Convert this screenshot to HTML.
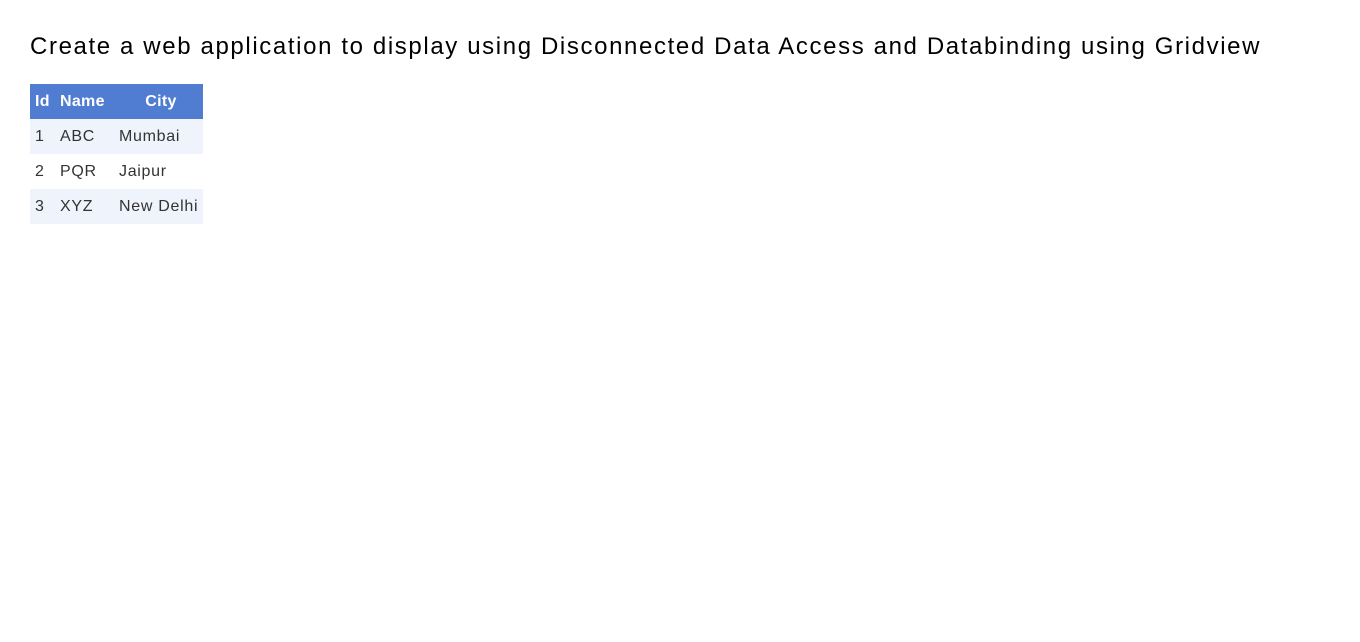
<!DOCTYPE html>
<html><head><style>
body{margin:0;background:#fff;font-family:"Liberation Sans",sans-serif;}
h2{position:absolute;left:30px;top:33px;margin:0;font-weight:normal;font-size:24px;color:#000;white-space:nowrap;letter-spacing:1.62px}
table{position:absolute;left:30px;top:84px;border-collapse:collapse;table-layout:fixed;width:173px;font-size:16px;color:#333;letter-spacing:0.7px}
td,th{height:35px;padding:0 0 0 5px;white-space:nowrap;line-height:35px;overflow:hidden}
th{background:#507cd1;color:#fff;font-weight:bold;letter-spacing:0.3px}
tr.a td{background:#eff3fb}
</style></head><body>
<h2>Create a web application to display using Disconnected Data Access and Databinding using Gridview</h2>
<table>
<colgroup><col style="width:25px"><col style="width:59px"><col style="width:89px"></colgroup>
<tr><th style="text-align:left">Id</th><th style="text-align:left">Name</th><th>City</th></tr>
<tr class="a"><td>1</td><td>ABC</td><td>Mumbai</td></tr>
<tr><td>2</td><td>PQR</td><td>Jaipur</td></tr>
<tr class="a"><td>3</td><td>XYZ</td><td>New Delhi</td></tr>
</table>
</body></html>
